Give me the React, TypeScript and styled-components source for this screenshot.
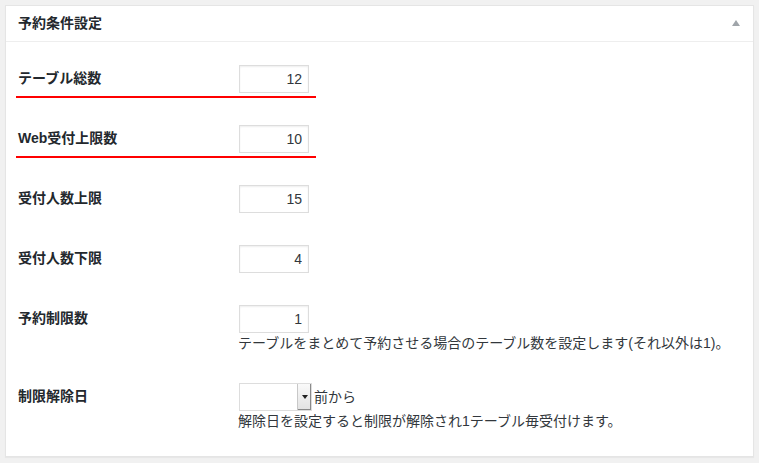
import React from "react";
import styled, { createGlobalStyle, css } from "styled-components";

const GlobalStyle = createGlobalStyle`
  html, body { margin: 0; padding: 0; }
  body {
    background: #f1f1f1;
    color: #23282d;
    font-family: "Liberation Sans", "Noto Sans CJK JP", sans-serif;
    font-size: 14px;
  }
`;

const Page = styled.div`
  padding: 5px;
`;

const Panel = styled.section`
  background: #fff;
  border: 1px solid #e5e5e5;
  box-shadow: 0 1px 1px rgba(0, 0, 0, 0.04);
`;

const Header = styled.div`
  display: flex;
  align-items: center;
  justify-content: space-between;
  padding: 8px 13px 8px 12px;
  border-bottom: 1px solid #eee;
`;

const Title = styled.h2`
  margin: 0;
  font-size: 14px;
  line-height: 19px;
  font-weight: 600;
  color: #23282d;
`;

const Toggle = styled.span`
  width: 0;
  height: 0;
  border-left: 4px solid transparent;
  border-right: 4px solid transparent;
  border-bottom: 6px solid #a0a5aa;
  margin-top: -1px;
`;

const Inside = styled.div`
  padding: 7px 12px 11px;
`;

const Row = styled.div<{ $highlight?: boolean }>`
  position: relative;
  display: grid;
  grid-template-columns: 210px 1fr;
  ${(p) =>
    p.$highlight &&
    css`
      &::after {
        content: "";
        position: absolute;
        left: -2px;
        top: 47px;
        width: 300px;
        height: 2px;
        background: #f00;
      }
    `}
`;

const Label = styled.div`
  padding: 20px 10px 20px 0;
  line-height: 18px;
  font-weight: 600;
  color: #23282d;
`;

const Cell = styled.div`
  padding: 15px 10px;
  line-height: 18px;
`;

const NumberInput = styled.input`
  box-sizing: border-box;
  display: block;
  width: 70px;
  height: 28px;
  margin: 1px;
  padding: 3px 6px;
  border: 1px solid #ddd;
  box-shadow: inset 0 1px 2px rgba(0, 0, 0, 0.07);
  background: #fff;
  color: #32373c;
  font-family: "Liberation Sans", "Noto Sans CJK JP", sans-serif;
  font-size: 14px;
  text-align: right;
  outline: none;
`;

const Description = styled.p`
  margin: 2px 0 0;
  font-size: 14px;
  line-height: 17px;
  color: #32373c;
`;

const Inline = styled.div`
  display: flex;
  align-items: center;
  gap: 2px;
  margin: 1px;
  color: #32373c;
`;

const SelectBox = styled.div`
  display: flex;
  box-sizing: border-box;
  width: 73px;
  height: 28px;
  border: 1px solid #ddd;
  background: #fff;
`;

const SelectField = styled.span`
  flex: 1;
`;

const SelectButton = styled.span`
  display: flex;
  align-items: center;
  justify-content: center;
  width: 13px;
  background: linear-gradient(#fafafa, #e2e2e2);
  border-left: 1px solid #c8c8c8;
  box-shadow: inset -1px -1px 0 #8a8a8a;

  &::before {
    content: "";
    border-left: 3px solid transparent;
    border-right: 3px solid transparent;
    border-top: 4px solid #222;
  }
`;

type Field = { label: string; value: string; highlight?: boolean };

const fields: Field[] = [
  { label: "テーブル総数", value: "12", highlight: true },
  { label: "Web受付上限数", value: "10", highlight: true },
  { label: "受付人数上限", value: "15" },
  { label: "受付人数下限", value: "4" },
];

export default function App() {
  return (
    <>
      <GlobalStyle />
      <Page>
        <Panel>
          <Header>
            <Title>予約条件設定</Title>
            <Toggle />
          </Header>
          <Inside>
            {fields.map((f) => (
              <Row key={f.label} $highlight={f.highlight}>
                <Label>{f.label}</Label>
                <Cell>
                  <NumberInput defaultValue={f.value} />
                </Cell>
              </Row>
            ))}
            <Row>
              <Label>予約制限数</Label>
              <Cell>
                <NumberInput defaultValue="1" />
                <Description>
                  テーブルをまとめて予約させる場合のテーブル数を設定します(それ以外は1)。
                </Description>
              </Cell>
            </Row>
            <Row>
              <Label>制限解除日</Label>
              <Cell>
                <Inline>
                  <SelectBox>
                    <SelectField />
                    <SelectButton />
                  </SelectBox>
                  前から
                </Inline>
                <Description>
                  解除日を設定すると制限が解除され1テーブル毎受付けます。
                </Description>
              </Cell>
            </Row>
          </Inside>
        </Panel>
      </Page>
    </>
  );
}
